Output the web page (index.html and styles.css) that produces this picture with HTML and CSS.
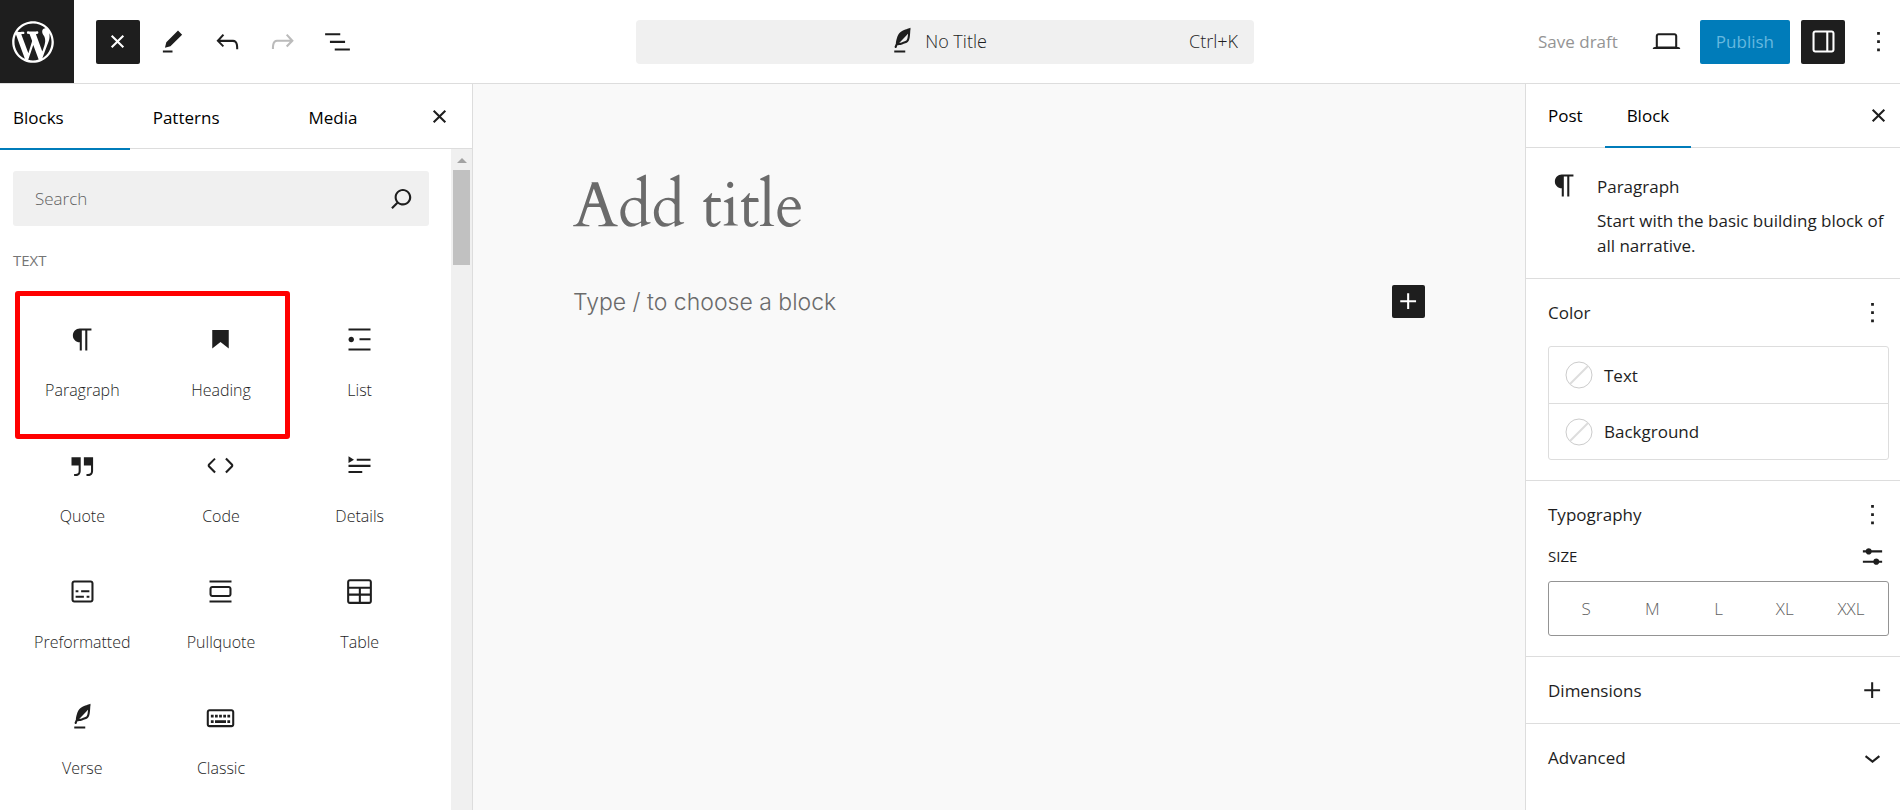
FILE: index.html
```html
<!DOCTYPE html>
<html lang="en">
  <head>
    <meta charset="UTF-8" />
    <meta name="viewport" content="width=device-width, initial-scale=1.0" />
    <title>Add New Post</title>
    <link rel="stylesheet" href="styles.css">
  </head>
  <body>
    <header class="header">
      <a class="logo" href="#" aria-label="View posts">
        <svg viewBox="-2 -2 24 24"><path d="M20 10c0-5.51-4.49-10-10-10C4.48 0 0 4.49 0 10c0 5.52 4.48 10 10 10 5.51 0 10-4.48 10-10zM7.78 15.37L4.37 6.22c.55-.02 1.17-.08 1.17-.08.5-.06.44-1.13-.06-1.11 0 0-1.45.11-2.37.11-.18 0-.37 0-.58-.01C4.12 2.69 6.87 1.11 10 1.11c2.33 0 4.45.87 6.05 2.34-.68-.11-1.65.39-1.65 1.58 0 .74.45 1.36.9 2.1.35.61.55 1.36.55 2.46 0 1.49-1.4 5-1.4 5l-3.03-8.37c.54-.02.82-.17.82-.17.5-.05.44-1.25-.06-1.22 0 0-1.44.12-2.38.12-.87 0-2.33-.12-2.33-.12-.5-.03-.56 1.2-.06 1.22l.92.08 1.26 3.41zM17.41 10c.24-.64.74-1.87.43-4.25.7 1.29 1.05 2.71 1.05 4.25 0 3.29-1.73 6.24-4.4 7.78.97-2.59 1.94-5.2 2.92-7.78zM6.1 18.09C3.12 16.65 1.11 13.53 1.11 10c0-1.3.23-2.48.72-3.59C3.25 10.3 4.67 14.2 6.1 18.09zm4.03-6.63l2.58 6.98c-.86.29-1.76.45-2.71.45-.79 0-1.57-.11-2.29-.33.81-2.38 1.62-4.74 2.42-7.1z" /></svg>
      </a>
      <div class="tools">
        <button class="tool dark" aria-label="Close inserter">
          <svg class="icon" viewBox="0 0 24 24"><path d="M12 13.06l3.712 3.713 1.061-1.06L13.061 12l3.712-3.712-1.06-1.06L12 10.938 8.288 7.227l-1.061 1.06L10.939 12l-3.712 3.712 1.06 1.061L12 13.061z" /></svg>
        </button>
        <button class="tool" aria-label="Tools">
          <svg class="icon" viewBox="0 0 24 24"><path d="m19 7-3-3-8.5 8.5-1 4 4-1L19 7Zm-7 11.5H5V20h7v-1.5Z" /></svg>
        </button>
        <button class="tool" aria-label="Undo">
          <svg class="icon" viewBox="0 0 24 24"><path d="M18.3 11.7c-.6-.6-1.4-.9-2.3-.9H6.7l2.9-3.3-1.1-1-4.5 5L8.5 16l1-1-2.7-2.7H16c.5 0 .9.2 1.3.5 1 1 1 3.4 1 4.5v.3h1.5v-.2c0-1.5 0-4.3-1.5-5.7z" /></svg>
        </button>
        <button class="tool" aria-label="Redo" disabled>
          <svg class="icon" viewBox="0 0 24 24"><path d="M15.6 6.5l-1.1 1 2.9 3.3H8c-.9 0-1.7.3-2.3.9-1.4 1.5-1.4 4.2-1.4 5.6v.2h1.5v-.3c0-1.1 0-3.5 1-4.5.3-.3.7-.5 1.3-.5h9.2L14.5 15l1.1 1.1 4.6-4.6-4.6-5z" /></svg>
        </button>
        <button class="tool" aria-label="Document overview">
          <svg class="icon" viewBox="0 0 24 24"><path d="M3 6h11v1.5H3V6Zm3.5 5.5h11V13h-11v-1.5ZM21 17H10v1.5h11V17Z" /></svg>
        </button>
      </div>
      <div class="header-center">
        <button class="doc-bar">
          <span class="doc-title">
            <svg class="icon" viewBox="0 0 24 24"><path d="M17.8 2l-.9.3c-.1 0-3.6 1-5.2 2.1C10 5.5 9.3 6.5 8.9 7.1c-.6.9-1.7 4.7-1.7 6.3l-.9 2.3c-.2.4 0 .8.4 1 .1 0 .2.1.3.1.3 0 .6-.2.7-.5l.6-1.5c.3 0 .7-.1 1.2-.2.7-.1 1.4-.3 2.2-.5.8-.2 1.6-.5 2.4-.8.7-.3 1.4-.7 1.9-1.2s.8-1.2 1-1.9c.2-.7.3-1.6.4-2.4.1-.8.1-1.7.2-2.5 0-.8.1-1.5.2-2.1V2zm-1.9 5.6c-.1.8-.2 1.5-.3 2.1-.2.6-.4 1-.6 1.3-.3.3-.8.6-1.4.9-.7.3-1.4.5-2.2.8-.6.2-1.3.3-1.8.4L15 7.5c.3-.3.6-.7 1-1.1 0 .4 0 .8-.1 1.2zM6 20h8v-1.5H6V20z" /></svg>
            No Title
          </span>
          <span class="shortcut">Ctrl+K</span>
        </button>
      </div>
      <div class="actions">
        <button class="save" disabled>Save draft</button>
        <button class="tool" aria-label="Preview">
          <svg class="icon" viewBox="0 0 24 24"><path d="M20.5 16h-.7V8c0-1.1-.9-2-2-2H6.2c-1.1 0-2 .9-2 2v8h-.7c-.8 0-1.5.7-1.5 1.5h20c0-.8-.7-1.5-1.5-1.5zM5.7 8c0-.3.2-.5.5-.5h11.6c.3 0 .5.2.5.5v7.6H5.7V8z" /></svg>
        </button>
        <button class="publish" disabled>Publish</button>
        <button class="tool dark" aria-label="Settings">
          <svg class="icon" viewBox="0 0 24 24"><path d="M18 4H6c-1.1 0-2 .9-2 2v12c0 1.1.9 2 2 2h12c1.1 0 2-.9 2-2V6c0-1.1-.9-2-2-2zm-4 14.5H6c-.3 0-.5-.2-.5-.5V6c0-.3.2-.5.5-.5h8v13zm4.5-.5c0 .3-.2.5-.5.5h-2.5v-13H18c.3 0 .5.2.5.5v12z" /></svg>
        </button>
        <button class="tool" aria-label="Options">
          <svg class="icon" viewBox="0 0 24 24"><path d="M13 19h-2v-2h2v2zm0-6h-2v-2h2v2zm0-6h-2V5h2v2z" /></svg>
        </button>
      </div>
    </header>

    <div class="editor">
      <aside class="inserter">
        <div class="inserter-tabs">
          <button class="inserter-tab active">Blocks</button>
          <button class="inserter-tab">Patterns</button>
          <button class="inserter-tab">Media</button>
          <button class="tool close" aria-label="Close">
            <svg class="icon" viewBox="0 0 24 24"><path d="M12 13.06l3.712 3.713 1.061-1.06L13.061 12l3.712-3.712-1.06-1.06L12 10.938 8.288 7.227l-1.061 1.06L10.939 12l-3.712 3.712 1.06 1.061L12 13.061z" /></svg>
          </button>
        </div>
        <div class="inserter-body">
          <div class="inserter-list">
            <div class="search">
              <input type="text" placeholder="Search" aria-label="Search" />
              <svg class="icon" viewBox="0 0 24 24"><path d="M13 5c-3.3 0-6 2.7-6 6 0 1.4.5 2.7 1.3 3.7l-3.8 3.8 1.1 1.1 3.8-3.8c1 .8 2.3 1.3 3.7 1.3 3.3 0 6-2.7 6-6S16.3 5 13 5zm0 10.5c-2.5 0-4.5-2-4.5-4.5s2-4.5 4.5-4.5 4.5 2 4.5 4.5-2 4.5-4.5 4.5z" /></svg>
            </div>
            <h2 class="group-title">TEXT</h2>
            <div class="blocks">
              <button class="block">
                <svg class="icon" viewBox="0 0 24 24"><path d="m9.99609 14v-.2251l.00391.0001v6.225h1.5v-14.5h2.5v14.5h1.5v-14.5h3v-1.5h-8.50391c-2.76142 0-5 2.23858-5 5 0 2.7614 2.23858 5 5 5z" /></svg>
                Paragraph
              </button>
              <button class="block">
                <svg class="icon" viewBox="0 0 24 24"><path d="M6 5V18.5911L12 13.8473L18 18.5911V5H6Z" /></svg>
                Heading
              </button>
              <button class="block">
                <svg class="icon" viewBox="0 0 24 24"><path d="M4 4v1.5h16V4H4zm8 8.5h8V11h-8v1.5zM4 20h16v-1.5H4V20zm4-8c0-1.1-.9-2-2-2s-2 .9-2 2 .9 2 2 2 2-.9 2-2z" /></svg>
                List
              </button>
              <button class="block">
                <svg class="icon" viewBox="0 0 24 24"><path d="M13 6v6h5.2v4c0 .8-.2 1.4-.5 1.7-.6.6-1.6.6-2.5.5h-.3v1.5h.5c1 0 2.3-.1 3.3-1 .6-.6 1-1.6 1-2.8V6H13zm-9 6h5.2v4c0 .8-.2 1.4-.5 1.7-.6.6-1.6.6-2.5.5h-.3v1.5h.5c1 0 2.3-.1 3.3-1 .6-.6 1-1.6 1-2.8V6H4v6z" /></svg>
                Quote
              </button>
              <button class="block">
                <svg class="icon" viewBox="0 0 24 24"><path d="M20.8 10.7l-4.3-4.3-1.1 1.1 4.3 4.3c.1.1.1.3 0 .4l-4.3 4.3 1.1 1.1 4.3-4.3c.7-.8.7-1.9 0-2.6zM4.2 11.8l4.3-4.3-1-1-4.3 4.3c-.7.7-.7 1.8 0 2.5l4.3 4.3 1.1-1.1-4.3-4.3c-.2-.1-.2-.3-.1-.4z" /></svg>
                Code
              </button>
              <button class="block">
                <svg class="icon" viewBox="0 0 24 24"><path d="M4 16h10v1.5H4V16Zm0-4.5h16V13H4v-1.5ZM10 7h10v1.5H10V7Z" /><path d="m4 5.25 4 2.5-4 2.5v-5Z" /></svg>
                Details
              </button>
              <button class="block">
                <svg class="icon" viewBox="0 0 24 24"><path d="M18 4H6c-1.1 0-2 .9-2 2v12c0 1.1.9 2 2 2h12c1.1 0 2-.9 2-2V6c0-1.1-.9-2-2-2zm.5 14c0 .3-.2.5-.5.5H6c-.3 0-.5-.2-.5-.5V6c0-.3.2-.5.5-.5h12c.3 0 .5.2.5.5v12z" /><path d="M7 16.5h6V15H7v1.5zm4-4h6V11h-6v1.5zM9 11H7v1.5h2V11zm6 5.5h2V15h-2v1.5z" /></svg>
                Preformatted
              </button>
              <button class="block">
                <svg class="icon" viewBox="0 0 24 24"><path d="M18 8H6c-1.1 0-2 .9-2 2v4c0 1.1.9 2 2 2h12c1.1 0 2-.9 2-2v-4c0-1.1-.9-2-2-2zm.5 6c0 .3-.2.5-.5.5H6c-.3 0-.5-.2-.5-.5v-4c0-.3.2-.5.5-.5h12c.3 0 .5.2.5.5v4zM4 4v1.5h16V4H4zm0 16h16v-1.5H4V20z" /></svg>
                Pullquote
              </button>
              <button class="block">
                <svg class="icon" viewBox="0 0 24 24"><path d="M19 3H5c-1.1 0-2 .9-2 2v14c0 1.1.9 2 2 2h14c1.1 0 2-.9 2-2V5c0-1.1-.9-2-2-2zM5 4.5h14c.3 0 .5.2.5.5v3.5h-15V5c0-.3.2-.5.5-.5zm8 5.5h6.5v3.5H13V10zm-1.5 3.5h-7V10h7v3.5zm-7 5.5v-4h7v4.5H5c-.3 0-.5-.2-.5-.5zm14.5.5h-6V15h6.5v4c0 .3-.2.5-.5.5z" /></svg>
                Table
              </button>
              <button class="block">
                <svg class="icon" viewBox="0 0 24 24"><path d="M17.8 2l-.9.3c-.1 0-3.6 1-5.2 2.1C10 5.5 9.3 6.5 8.9 7.1c-.6.9-1.7 4.7-1.7 6.3l-.9 2.3c-.2.4 0 .8.4 1 .1 0 .2.1.3.1.3 0 .6-.2.7-.5l.6-1.5c.3 0 .7-.1 1.2-.2.7-.1 1.4-.3 2.2-.5.8-.2 1.6-.5 2.4-.8.7-.3 1.4-.7 1.9-1.2s.8-1.2 1-1.9c.2-.7.3-1.6.4-2.4.1-.8.1-1.7.2-2.5 0-.8.1-1.5.2-2.1V2zm-1.9 5.6c-.1.8-.2 1.5-.3 2.1-.2.6-.4 1-.6 1.3-.3.3-.8.6-1.4.9-.7.3-1.4.5-2.2.8-.6.2-1.3.3-1.8.4L15 7.5c.3-.3.6-.7 1-1.1 0 .4 0 .8-.1 1.2zM6 20h8v-1.5H6V20z" /></svg>
                Verse
              </button>
              <button class="block">
                <svg class="icon" viewBox="0 0 24 24"><path d="M20 6H4c-1.1 0-2 .9-2 2v9c0 1.1.9 2 2 2h16c1.1 0 2-.9 2-2V8c0-1.1-.9-2-2-2zm.5 11c0 .3-.2.5-.5.5H4c-.3 0-.5-.2-.5-.5V8c0-.3.2-.5.5-.5h16c.3 0 .5.2.5.5v9zM10 10H8v2h2v-2zm-5 2h2v-2H5v2zm8-2h-2v2h2v-2zm-5 6h8v-2H8v2zm6-4h2v-2h-2v2zm3 0h2v-2h-2v2zm0 4h2v-2h-2v2zM5 16h2v-2H5v2z" /></svg>
                Classic
              </button>
              <div class="highlight"></div>
            </div>
          </div>
          <div class="scrollbar">
            <div class="scroll-up"></div>
            <div class="scroll-thumb"></div>
          </div>
        </div>
      </aside>

      <main class="canvas">
        <div class="post">
          <input class="post-title" type="text" placeholder="Add title" aria-label="Add title" />
          <div class="post-line">
            <input class="post-text" type="text" placeholder="Type / to choose a block" aria-label="Empty block" />
            <button class="add" aria-label="Add block">
              <svg class="icon" viewBox="0 0 24 24"><path d="M11 12.5V17.5H12.5V12.5H17.5V11H12.5V6H11V11H6V12.5H11Z" /></svg>
            </button>
          </div>
        </div>
      </main>

      <aside class="sidebar">
        <div class="sidebar-tabs">
          <button class="sidebar-tab">Post</button>
          <button class="sidebar-tab active">Block</button>
          <button class="tool close" aria-label="Close settings">
            <svg class="icon" viewBox="0 0 24 24"><path d="M12 13.06l3.712 3.713 1.061-1.06L13.061 12l3.712-3.712-1.06-1.06L12 10.938 8.288 7.227l-1.061 1.06L10.939 12l-3.712 3.712 1.06 1.061L12 13.061z" /></svg>
          </button>
        </div>
        <section class="panel card">
          <svg class="icon" viewBox="0 0 24 24"><path d="m9.99609 14v-.2251l.00391.0001v6.225h1.5v-14.5h2.5v14.5h1.5v-14.5h3v-1.5h-8.50391c-2.76142 0-5 2.23858-5 5 0 2.7614 2.23858 5 5 5z" /></svg>
          <div class="card-text">
            <h2>Paragraph</h2>
            <p>Start with the basic building block of all narrative.</p>
          </div>
        </section>
        <section class="panel">
          <div class="panel-head">
            <h2>Color</h2>
            <button class="small" aria-label="Color options">
              <svg class="icon" viewBox="0 0 24 24"><path d="M13 19h-2v-2h2v2zm0-6h-2v-2h2v2zm0-6h-2V5h2v2z" /></svg>
            </button>
          </div>
          <div class="colors">
            <button class="color">
              <svg class="swatch" viewBox="0 0 28 28"><circle cx="14" cy="14" r="13" /><path d="M5 23 23 5" /></svg>
              Text
            </button>
            <button class="color">
              <svg class="swatch" viewBox="0 0 28 28"><circle cx="14" cy="14" r="13" /><path d="M5 23 23 5" /></svg>
              Background
            </button>
          </div>
        </section>
        <section class="panel">
          <div class="panel-head typo">
            <h2>Typography</h2>
            <button class="small" aria-label="Typography options">
              <svg class="icon" viewBox="0 0 24 24"><path d="M13 19h-2v-2h2v2zm0-6h-2v-2h2v2zm0-6h-2V5h2v2z" /></svg>
            </button>
          </div>
          <div class="size-head">
            <span id="size-label">SIZE</span>
            <button class="small" aria-label="Set custom size">
              <svg class="icon" viewBox="0 0 24 24"><path d="m19 7.5h-7.628c-.3089-.87389-1.1423-1.5-2.122-1.5-.97966 0-1.81309.62611-2.12197 1.5h-2.12803v1.5h2.12803c.30888.87389 1.14231 1.5 2.12197 1.5.9797 0 1.8131-.62611 2.122-1.5h7.628z" /><path d="m19 15h-2.128c-.3089-.8739-1.1423-1.5-2.122-1.5s-1.8131.6261-2.122 1.5h-7.628v1.5h7.628c.3089.8739 1.1423 1.5 2.122 1.5s1.8131-.6261 2.122-1.5h2.128z" /></svg>
            </button>
          </div>
          <div class="sizes" role="radiogroup" aria-labelledby="size-label">
            <label class="size"><input type="radio" name="size" value="s" />S</label>
            <label class="size"><input type="radio" name="size" value="m" />M</label>
            <label class="size"><input type="radio" name="size" value="l" />L</label>
            <label class="size"><input type="radio" name="size" value="xl" />XL</label>
            <label class="size"><input type="radio" name="size" value="xxl" />XXL</label>
          </div>
        </section>
        <section class="panel">
          <div class="panel-head closed">
            <h2>Dimensions</h2>
            <button class="small" aria-label="Dimensions options">
              <svg class="icon" viewBox="0 0 24 24"><path d="M11 12.5V17.5H12.5V12.5H17.5V11H12.5V6H11V11H6V12.5H11Z" /></svg>
            </button>
          </div>
        </section>
        <section class="panel last">
          <div class="panel-head closed">
            <h2>Advanced</h2>
            <button class="small" aria-label="Toggle advanced">
              <svg class="icon" viewBox="0 0 24 24"><path d="M17.5 11.6L12 16l-5.5-4.4.9-1.2L12 14l4.5-3.6 1 1.2z" /></svg>
            </button>
          </div>
        </section>
      </aside>
    </div>
  </body>
</html>
```
FILE: styles.css
```css
* {
  box-sizing: border-box;
}
body {
  display: flex;
  flex-direction: column;
  min-height: 100vh;
  margin: 0;
  background-color: white;
  color: #1e1e1e;
  font-family: 'Segoe UI', 'Open Sans', 'Noto Sans', sans-serif;
  font-size: 17px;
  line-height: 25px;
}
button,
input {
  margin: 0;
  padding: 0;
  border: none;
  background: none;
  color: inherit;
  font: inherit;
}
h2,
p {
  margin: 0;
}
h2 {
  font-size: 17px;
  font-weight: 500;
}
.icon {
  display: block;
  flex: none;
  width: 33px;
  height: 33px;
  fill: currentColor;
}

/* top bar */
.header {
  display: flex;
  align-items: center;
  border-bottom: 1px solid #ddd;
}
.logo {
  display: flex;
  align-items: center;
  width: 74px;
  height: 83px;
  padding-left: 8px;
  background-color: #1e1e1e;
  color: white;
}
.logo svg {
  width: 50px;
  height: 50px;
  fill: currentColor;
}
.tools {
  display: flex;
  gap: 11px;
  margin-left: 22px;
}
.tool {
  display: flex;
  flex: none;
  align-items: center;
  justify-content: center;
  width: 44px;
  height: 44px;
  border-radius: 2px;
}
.tools .tool {
  padding-right: 1px;
}
.tool:disabled {
  color: #bbb;
}
.dark {
  background-color: #1e1e1e;
  color: white;
}
.header-center {
  display: flex;
  flex: 1;
  justify-content: center;
}
.doc-bar {
  display: flex;
  align-items: center;
  width: 618px;
  height: 44px;
  padding: 0 16px;
  border-radius: 4px;
  background-color: #f0f0f0;
  font-size: 18px;
  font-weight: 300;
}
.doc-title {
  display: flex;
  flex: 1;
  align-items: center;
  justify-content: center;
  gap: 6px;
  padding-left: 32px;
}
.actions {
  display: flex;
  align-items: center;
  gap: 11px;
}
.save {
  padding: 0 16px 0 8px;
  color: #949494;
}
.publish {
  height: 44px;
  padding: 0 16px;
  border-radius: 2px;
  background-color: #007cba;
  color: #66b8df;
}

.editor {
  display: flex;
  flex: 1;
}

/* block inserter */
.inserter {
  display: flex;
  flex: none;
  flex-direction: column;
  width: 473px;
  border-right: 1px solid #ddd;
}
.inserter-tabs {
  display: flex;
  gap: 10px;
  height: 65px;
  border-bottom: 1px solid #ddd;
}
.inserter-tab {
  height: 66px;
  padding: 2px 66px 0 13px;
  border-bottom: 2px solid transparent;
  color: black;
  font-weight: 500;
}
.inserter-tab:nth-child(3) {
  padding-right: 0;
}
.active {
  border-bottom-color: #007cba;
}
.close {
  align-self: center;
  margin-left: auto;
}
.inserter .close {
  margin-right: 11px;
}
.inserter-body {
  display: flex;
  flex: 1;
}
.inserter-list {
  flex: 1;
  padding: 22px 22px 0 13px;
}
.search {
  display: flex;
  align-items: center;
  height: 55px;
  padding: 0 11px 0 22px;
  border-radius: 3px;
  background-color: #f0f0f0;
}
.search input {
  flex: 1;
  min-width: 0;
  font-weight: 300;
}
.search input::placeholder {
  color: #616161;
}
.group-title {
  margin: 22px 0 27px;
  color: #757575;
  font-size: 15px;
}
.blocks {
  position: relative;
  display: grid;
  grid-template-columns: repeat(3, 1fr);
}
.block {
  display: flex;
  flex-direction: column;
  align-items: center;
  gap: 22px;
  padding: 23px 0;
  font-size: 16px;
  font-weight: 300;
}
/* frame over the first two blocks */
.highlight {
  position: absolute;
  top: -9px;
  left: 2px;
  width: 275px;
  height: 148px;
  border: 5px solid #f00;
  border-radius: 3px;
  pointer-events: none;
}
.scrollbar {
  display: flex;
  flex-direction: column;
  align-items: center;
  width: 21px;
  padding-top: 9px;
  background-color: #f0f0f0;
}
.scroll-up {
  border: 5px solid transparent;
  border-top: none;
  border-bottom-color: #a3a3a3;
}
.scroll-thumb {
  width: 17px;
  height: 95px;
  margin-top: 7px;
  background-color: #c1c1c1;
}

/* post canvas */
.canvas {
  flex: 1;
  background-color: #f9f9f9;
}
.post {
  max-width: 852px;
  margin: 0 auto;
  padding-top: 83px;
}
.post input::placeholder {
  color: #6b6b6b;
  opacity: 1;
}
.post-title {
  display: block;
  width: 100%;
  height: 80px;
  font-family: Cardo, 'Liberation Serif', serif;
  font-size: 63px;
  line-height: 80px;
}
.post-line {
  display: flex;
  align-items: center;
  margin-top: 38px;
}
.post-text {
  flex: 1;
  padding-top: 2px;
  font-family: Inter, sans-serif;
  font-size: 23px;
  font-weight: 300;
}
.add {
  border-radius: 2px;
  background-color: #1e1e1e;
  color: white;
}

/* settings sidebar */
.sidebar {
  flex: none;
  width: 375px;
  border-left: 1px solid #ddd;
}
.sidebar-tabs {
  display: flex;
  height: 64px;
  border-bottom: 1px solid #ddd;
}
.sidebar-tab {
  height: 64px;
  padding: 0 22px;
  border-bottom: 2px solid transparent;
  color: black;
  font-weight: 500;
}
.sidebar-tab.active {
  border-bottom-color: #007cba;
}
.panel {
  padding: 16px 11px 20px 22px;
  border-bottom: 1px solid #ddd;
}
.panel.last {
  border-bottom: none;
}
.card {
  display: flex;
  gap: 16px;
  padding-top: 21px;
  padding-right: 0;
}
.card h2 {
  margin: 5px 0 9px;
}
.panel-head {
  display: flex;
  align-items: center;
  justify-content: space-between;
  height: 35px;
  margin-bottom: 16px;
}
.panel-head.typo {
  margin-bottom: 8px;
}
.panel-head.closed {
  margin: 0;
}
.panel:nth-child(n + 5) {
  padding-bottom: 15px;
}
.colors {
  border: 1px solid #ddd;
  border-radius: 3px;
}
.color {
  display: flex;
  align-items: center;
  gap: 11px;
  width: 100%;
  height: 56px;
  padding-left: 16px;
}
.color + .color {
  border-top: 1px solid #ddd;
}
.swatch {
  width: 28px;
  height: 28px;
  fill: none;
  stroke: #ccc;
}
.swatch path {
  stroke: #ddd;
  stroke-width: 2;
}
.size-head {
  display: flex;
  align-items: center;
  justify-content: space-between;
  margin-bottom: 8px;
  font-size: 15px;
  font-weight: 500;
}
.sizes {
  display: flex;
  height: 55px;
  padding: 0 4px;
  border: 1px solid #949494;
  border-radius: 3px;
}
.size {
  display: flex;
  flex: 1;
  align-items: center;
  justify-content: center;
  color: #616161;
  font-weight: 300;
}
.size input {
  width: 0;
  height: 0;
  appearance: none;
}
```
